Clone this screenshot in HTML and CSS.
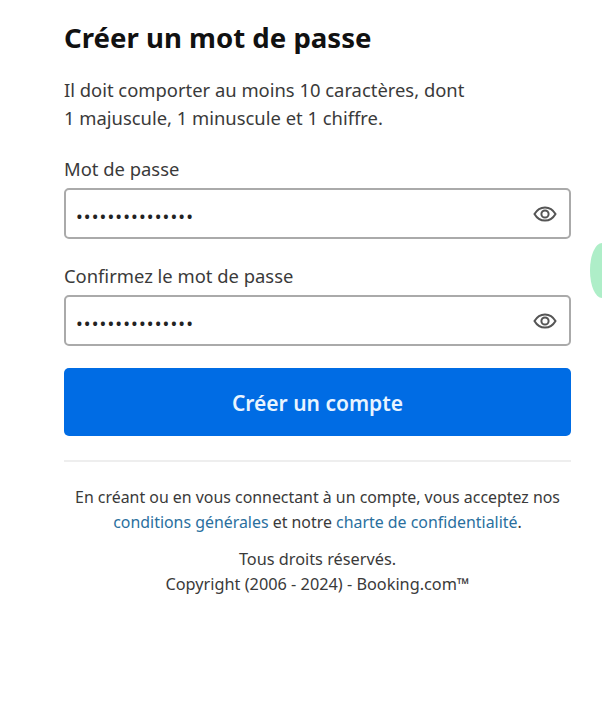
FILE: index.html
```html
<!DOCTYPE html>
<html lang="fr">
<head>
    <meta charset="UTF-8">
    <title>Créer un mot de passe</title>
    <link rel="stylesheet" href="styles.css">
</head>
<body>

<div class="container">
    <h1 class="title">Créer un mot de passe</h1>
    <p class="hint">Il doit comporter au moins 10 caractères, dont<br>1 majuscule, 1 minuscule et 1 chiffre.</p>

    <div class="field">
        <label class="label">Mot de passe</label>
        <div class="input">
            <span class="dots">•••••••••••••••</span>
            <svg class="eye" viewBox="0 0 24 24" width="24" height="24">
                <path d="M1.5 12C4 7.6 7.6 5.4 12 5.4S20 7.6 22.5 12C20 16.4 16.4 18.6 12 18.6S4 16.4 1.5 12Z" fill="none" stroke="#555" stroke-width="2"/>
                <circle cx="12" cy="12" r="3.6" fill="none" stroke="#555" stroke-width="2"/>
            </svg>
        </div>
    </div>

    <div class="field">
        <label class="label">Confirmez le mot de passe</label>
        <div class="input">
            <span class="dots">•••••••••••••••</span>
            <svg class="eye" viewBox="0 0 24 24" width="24" height="24">
                <path d="M1.5 12C4 7.6 7.6 5.4 12 5.4S20 7.6 22.5 12C20 16.4 16.4 18.6 12 18.6S4 16.4 1.5 12Z" fill="none" stroke="#555" stroke-width="2"/>
                <circle cx="12" cy="12" r="3.6" fill="none" stroke="#555" stroke-width="2"/>
            </svg>
        </div>
    </div>

    <button class="submit">Créer un compte</button>

    <hr class="divider">

    <div class="legal">
        <p>En créant ou en vous connectant à un compte, vous acceptez nos<br><a href="#">conditions générales</a> et notre <a href="#">charte de confidentialité</a>.</p>
        <p class="copyright">Tous droits réservés.<br>Copyright (2006 - 2024) - Booking.com™</p>
    </div>
</div>

<div class="blob"></div>

</body>
</html>
```

FILE: styles.css
```css
html, body {
    margin: 0;
    padding: 0;
    height: 100%;
    overflow: hidden;
    background-color: #fff;
    font-family: "Noto Sans", "Open Sans", sans-serif;
    color: #3a3a3a;
}
.container {
    width: 507px;
    margin-left: 64px;
    padding-top: 19px;
}
.title {
    margin: 0;
    font-size: 27.6px;
    line-height: 36px;
    font-weight: 700;
    color: #111;
}
.hint {
    margin: 21px 0 0;
    font-size: 18.4px;
    line-height: 28px;
    white-space: nowrap;
}
.field {
    margin-top: 25px;
}
.label {
    display: block;
    font-size: 18.4px;
    line-height: 24px;
    margin-bottom: 7px;
}
.input {
    display: flex;
    align-items: center;
    justify-content: space-between;
    box-sizing: border-box;
    height: 51px;
    padding: 0 12px 0 10px;
    border: 2px solid #aaa;
    border-radius: 5px;
}
.dots {
    margin-top: 4px;
    font-size: 18px;
    letter-spacing: 1.1px;
    color: #222;
}
.submit {
    display: block;
    width: 100%;
    height: 68px;
    margin-top: 22px;
    padding-top: 3px;
    border: 0;
    border-radius: 5px;
    background-color: #006ce4;
    color: #e8f4ff;
    font-family: inherit;
    font-size: 21px;
    font-weight: 600;
}
.divider {
    margin: 24px 0 0;
    border: 0;
    border-top: 2px solid #eee;
}
.legal {
    margin-top: 23px;
    text-align: center;
    font-size: 15.9px;
    line-height: 25px;
    white-space: nowrap;
}
.legal p {
    margin: 0 0 12px;
}
.legal .copyright {
    font-size: 16.3px;
}
.legal a {
    color: #2a6f9e;
    text-decoration: none;
}
.blob {
    position: absolute;
    left: 590px;
    top: 243px;
    width: 12px;
    height: 55px;
    border-radius: 12px 0 0 12px / 27px 0 0 27px;
    background-color: #aeeec8;
}
```
